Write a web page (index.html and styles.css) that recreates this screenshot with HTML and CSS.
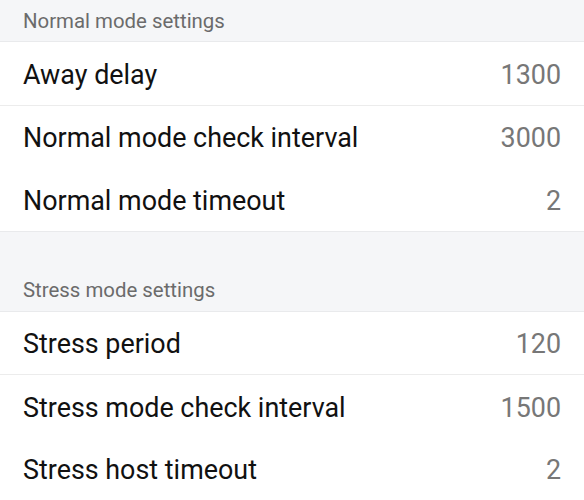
FILE: index.html
```html
<!DOCTYPE html>
<html>
<head>
<meta charset="utf-8">
<link rel="stylesheet" href="styles.css">
</head>
<body>
<div class="page">
  <section class="group">
    <div class="group-title">Normal mode settings</div>
    <div class="rows">
      <div class="row sep"><span class="label">Away delay</span><span class="value">1300</span></div>
      <div class="row"><span class="label">Normal mode check interval</span><span class="value">3000</span></div>
      <div class="row"><span class="label">Normal mode timeout</span><span class="value">2</span></div>
    </div>
  </section>
  <section class="group">
    <div class="group-title">Stress mode settings</div>
    <div class="rows">
      <div class="row sep"><span class="label">Stress period</span><span class="value">120</span></div>
      <div class="row"><span class="label">Stress mode check interval</span><span class="value">1500</span></div>
      <div class="row"><span class="label">Stress host timeout</span><span class="value">2</span></div>
    </div>
  </section>
</div>
</body>
</html>
```
FILE: styles.css
```css
html, body {
  margin: 0;
  padding: 0;
  background: #f5f6f8;
  font-family: Roboto, "Noto Sans", sans-serif;
}
.page {
  display: flex;
  flex-direction: column;
  gap: 38px;
}
.group-title {
  height: 41px;
  display: flex;
  align-items: center;
  padding: 0 23px;
  font-size: 20.4px;
  color: #6b6b6b;
  border-bottom: 1px solid #e9eaec;
}
.rows {
  background: #fff;
  border-bottom: 1px solid #e9eaec;
}
.row {
  height: 59.5px;
  display: flex;
  align-items: center;
  justify-content: space-between;
  padding: 3px 23px 0;
}
.row.sep {
  border-bottom: 1px solid #ececec;
}
.label {
  font-size: 26.9px;
  color: #111;
}
.value {
  font-size: 26.9px;
  color: #777;
}
```
